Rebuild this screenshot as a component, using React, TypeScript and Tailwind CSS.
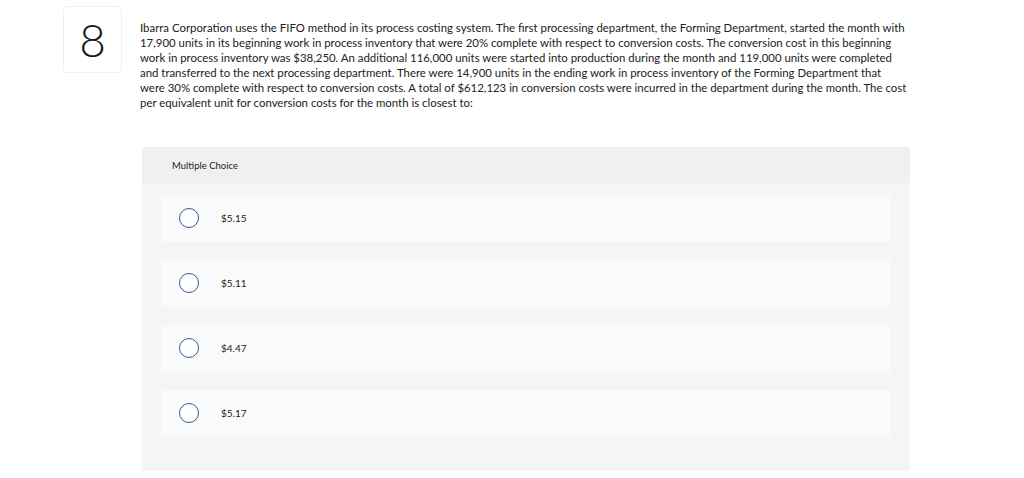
import React from 'react';

const options = ['$5.15', '$5.11', '$4.47', '$5.17'];

const lines = [
  'Ibarra Corporation uses the FIFO method in its process costing system. The first processing department, the Forming Department, started the month with',
  '17,900 units in its beginning work in process inventory that were 20% complete with respect to conversion costs. The conversion cost in this beginning',
  'work in process inventory was $38,250. An additional 116,000 units were started into production during the month and 119,000 units were completed',
  'and transferred to the next processing department. There were 14,900 units in the ending work in process inventory of the Forming Department that',
  'were 30% complete with respect to conversion costs. A total of $612,123 in conversion costs were incurred in the department during the month. The cost',
  'per equivalent unit for conversion costs for the month is closest to:',
];

export default function App() {
  return (
    <div className="w-[1024px] h-[478px] bg-white font-['Lato','Open_Sans',sans-serif] text-[#222] overflow-hidden">
      <div className="flex pt-[6px]">
        <div className="ml-[63px] w-[59px] h-[67px] shrink-0 rounded-[4px] border border-[#efefef] flex items-center justify-center">
          <span className="text-[46px] font-light leading-none text-[#1a1a1a]">8</span>
        </div>
        <div className="ml-[18px] w-[800px] pt-[14px]">
          <p className="text-[11.4px] leading-[15.1px] text-[#222] whitespace-nowrap">
            {lines.map((l) => (
              <span key={l} className="block">{l}</span>
            ))}
          </p>
        </div>
      </div>

      <div className="ml-[142px] mt-[36px] w-[768px] rounded-t-[4px] bg-[#f5f5f5] pb-[34px]">
        <div className="h-[36px] bg-[#f0f0f0] rounded-t-[4px] flex items-center pl-[30px] pt-[3px] text-[9.5px] text-[#222]">
          Multiple Choice
        </div>
        <div className="flex flex-col gap-[18px] pt-[12px] px-[19px]">
          {options.map((o) => (
            <div key={o} className="h-[47px] bg-[#fafafa] rounded-[2px] flex items-center pl-[18px]">
              <span className="w-[20px] h-[20px] rounded-full border border-[#2d5d90] bg-white" />
              <span className="ml-[22px] text-[10px] text-[#222]">{o}</span>
            </div>
          ))}
        </div>
      </div>
    </div>
  );
}
